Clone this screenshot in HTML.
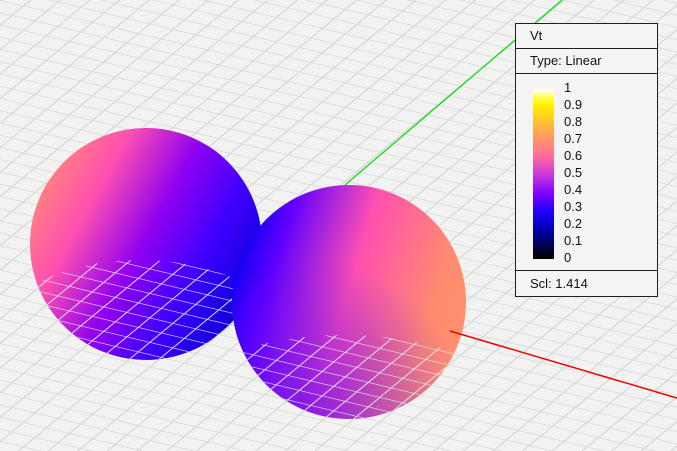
<!DOCTYPE html>
<html><head><meta charset="utf-8"><style>
html,body{margin:0;padding:0;width:677px;height:451px;overflow:hidden;background:#f2f2f2;font-family:"Liberation Sans",sans-serif;}
#lg{position:absolute;left:515px;top:23px;width:141px;height:272px;border:1px solid #202020;background:#f4f4f4;font-size:13px;color:#111;}
.row{border-bottom:1px solid #202020;height:24px;line-height:24px;padding-left:14px;}
#bar{position:absolute;left:17px;top:65px;width:21px;height:170px;background:linear-gradient(to bottom,#ffffff 0%,#ffff30 6%,#ffee00 10%,#ffa850 25%,#ff6aa0 40%,#c030e0 52%,#7a00ff 62%,#2000ff 72%,#0000b0 83%,#000030 95%,#000 100%);}
.lb{position:absolute;left:48px;font-size:13px;line-height:13px;}
#scl{position:absolute;left:0;right:0;bottom:0;height:25px;border-top:1px solid #202020;line-height:25px;padding-left:14px;}
</style></head><body>
<svg width="677" height="451" style="position:absolute;left:0;top:0">
<defs>
<pattern id="g" width="100" height="100" patternUnits="userSpaceOnUse" patternTransform="matrix(0.23,0.055,-0.115,0.095,0,0)">
<path d="M0 0H100M0 0V100" stroke="#d6d6d6" stroke-width="12" fill="none"/>
</pattern>
<pattern id="w" width="100" height="100" patternUnits="userSpaceOnUse" patternTransform="matrix(0.23,0.055,-0.115,0.095,0,0)">
<path d="M0 0H100M0 0V100" stroke="#e8e8f0" stroke-width="10" fill="none"/>
</pattern>
<linearGradient id="s1" x1="0" y1="0.2" x2="1" y2="0.75">
<stop offset="0" stop-color="#ff9070"/><stop offset="0.25" stop-color="#ff50b0"/><stop offset="0.5" stop-color="#9000f0"/><stop offset="0.72" stop-color="#4000ff"/><stop offset="1" stop-color="#0000d0"/>
</linearGradient>
<linearGradient id="s2" x1="0" y1="0.3" x2="1" y2="0.6">
<stop offset="0" stop-color="#0000f0"/><stop offset="0.18" stop-color="#6000ff"/><stop offset="0.5" stop-color="#ff50b0"/><stop offset="0.85" stop-color="#ff8a70"/><stop offset="1" stop-color="#ff9070"/>
</linearGradient>
<radialGradient id="b2" cx="0.3" cy="1" r="0.7">
<stop offset="0" stop-color="#5000ff" stop-opacity="0.7"/><stop offset="1" stop-color="#5000ff" stop-opacity="0"/>
</radialGradient>
<clipPath id="c1"><ellipse cx="140" cy="370" rx="170" ry="110"/></clipPath>
<clipPath id="c2"><ellipse cx="345" cy="440" rx="200" ry="105"/></clipPath>
</defs>
<rect width="677" height="451" fill="url(#g)"/>
<line x1="345" y1="185" x2="562" y2="0" stroke="#00dd00" stroke-width="1.2"/>
<circle cx="146" cy="244" r="116" fill="url(#s1)"/>
<circle cx="146" cy="244" r="116" fill="url(#w)" clip-path="url(#c1)"/>
<circle cx="349" cy="302" r="117" fill="url(#s2)"/>
<circle cx="349" cy="302" r="117" fill="url(#b2)"/>
<circle cx="349" cy="302" r="117" fill="url(#w)" clip-path="url(#c2)"/>
<line x1="450" y1="331" x2="677" y2="398" stroke="#ee0000" stroke-width="1.5"/>
</svg>
<div id="lg">
<div class="row">Vt</div>
<div class="row">Type: Linear</div>
<div id="bar"></div>
<div class="lb" style="top:57px">1</div>
<div class="lb" style="top:74px">0.9</div>
<div class="lb" style="top:91px">0.8</div>
<div class="lb" style="top:108px">0.7</div>
<div class="lb" style="top:125px">0.6</div>
<div class="lb" style="top:142px">0.5</div>
<div class="lb" style="top:159px">0.4</div>
<div class="lb" style="top:176px">0.3</div>
<div class="lb" style="top:193px">0.2</div>
<div class="lb" style="top:210px">0.1</div>
<div class="lb" style="top:227px">0</div>
<div id="scl">Scl: 1.414</div>
</div>
</body></html>
